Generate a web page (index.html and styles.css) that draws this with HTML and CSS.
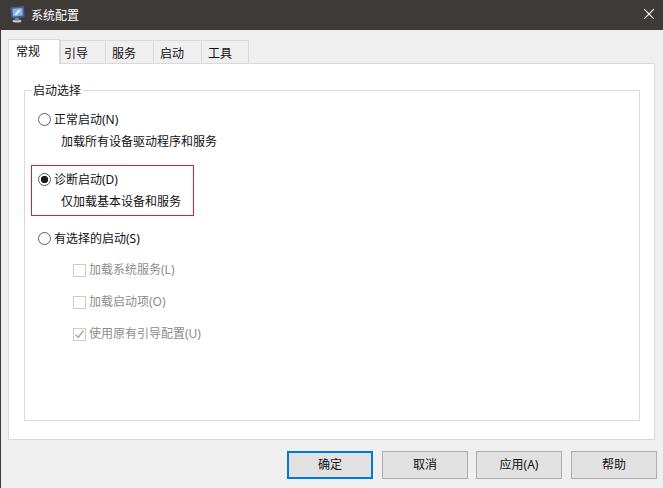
FILE: index.html
```html
<!DOCTYPE html>
<html lang="zh">
<head>
<meta charset="utf-8">
<title>系统配置</title>
<link rel="stylesheet" href="styles.css">
</head>
<body>
<div class="window">
  <header class="titlebar">
    <svg class="app-icon" width="15" height="17" viewBox="0 0 15 17">
      <ellipse cx="7" cy="15" rx="4.5" ry="1.6" fill="#c4c7cb"/>
      <rect x="5" y="11.5" width="4" height="3" fill="#7d828a"/>
      <path d="M0.5 1.2 L14 0 L14.6 11.2 L1.4 12.4 Z" fill="#4a5a9a"/>
      <path d="M2.4 2.8 L12.4 2 L12.8 9.6 L3 10.4 Z" fill="#7fb6e6"/>
      <path d="M4.5 8.2 L9 3.6 L10.6 4.6 L6 9.2 Z" fill="#e6f2fc"/>
    </svg>
    <span class="title">系统配置</span>
    <svg class="close" width="10" height="10" viewBox="0 0 10 10">
      <path d="M0 0 L10 10 M10 0 L0 10" stroke="#fff" stroke-width="1.1" fill="none"/>
    </svg>
  </header>
  <main class="content">
    <nav class="tabs">
      <span class="tab tab-active">常规</span>
      <span class="tab tab-second">引导</span>
      <span class="tab">服务</span>
      <span class="tab">启动</span>
      <span class="tab tab-last">工具</span>
    </nav>
    <section class="panel">
      <fieldset class="group">
        <legend class="legend">启动选择</legend>
        <div class="option option-first">
          <div class="radio-row"><span class="radio"></span><span class="label">正常启动(N)</span></div>
          <p class="desc">加载所有设备驱动程序和服务</p>
        </div>
        <div class="option option-marked">
          <div class="radio-row"><span class="radio radio-on"></span><span class="label">诊断启动(D)</span></div>
          <p class="desc">仅加载基本设备和服务</p>
        </div>
        <div class="option option-third">
          <div class="radio-row"><span class="radio"></span><span class="label">有选择的启动(S)</span></div>
        </div>
        <div class="checks">
          <div class="check-row"><span class="check"></span><span>加载系统服务(L)</span></div>
          <div class="check-row"><span class="check"></span><span>加载启动项(O)</span></div>
          <div class="check-row">
            <span class="check">
              <svg width="11" height="11" viewBox="0 0 11 11"><path d="M1.5 5.5 L4.2 8.5 L9.5 1.5" stroke="#a6a6a6" stroke-width="1.4" fill="none"/></svg>
            </span>
            <span>使用原有引导配置(U)</span>
          </div>
        </div>
      </fieldset>
    </section>
    <footer class="buttons">
      <button class="btn btn-default">确定</button>
      <button class="btn">取消</button>
      <button class="btn">应用(A)</button>
      <button class="btn">帮助</button>
    </footer>
  </main>
</div>
</body>
</html>
```
FILE: styles.css
```css
* { box-sizing: border-box; }
html, body { margin: 0; padding: 0; }
body {
  width: 663px;
  height: 488px;
  overflow: hidden;
  font-family: "Noto Sans", "Noto Sans CJK SC", sans-serif;
  font-size: 12px;
  color: #111;
}
.window {
  width: 663px;
  height: 488px;
  display: flex;
  flex-direction: column;
  background: #efefef;
  border-left: 1px solid #3d3a38;
}
.titlebar {
  height: 30px;
  flex: none;
  display: flex;
  align-items: center;
  background: #3d3a38;
  color: #fff;
  padding: 0 9px 2px 9px;
}
.app-icon { flex: none; }
.title { margin-left: 6px; padding-top: 2px; }
.close { margin-left: auto; }
.content {
  flex: 1;
  display: flex;
  flex-direction: column;
  padding: 9px 6px 10px 7px;
}
.tabs {
  display: flex;
  align-items: flex-end;
  height: 24px;
  position: relative;
  z-index: 1;
}
.tab {
  width: 49px;
  height: 23px;
  margin-left: -1px;
  padding: 1px 0 0 6px;
  display: flex;
  align-items: center;
  background: #efefef;
  border: 1px solid #d9d9d9;
  border-bottom: 0;
}
.tab-second { margin-left: 0; padding-left: 3px; width: 46px; }
.tab-last { width: 48px; }
.tab-active {
  width: 52px;
  height: 25px;
  margin-left: 0;
  margin-bottom: -1px;
  padding: 0 0 2px 7px;
  background: #fff;
}
.panel {
  width: 647px;
  height: 377px;
  flex: none;
  background: #fff;
  border: 1px solid #d9d9d9;
  padding: 19px 14px 18px 15px;
}
.group {
  height: 100%;
  margin: 0;
  min-width: 0;
  border: 1px solid #d9d9d9;
  padding: 0 0 0 13px;
  position: relative;
}
.legend {
  margin-left: -6px;
  padding: 0 2px 0 1px;
  height: 14px;
  line-height: 16px;
}
.radio-row, .check-row {
  display: flex;
  align-items: center;
  height: 18px;
  line-height: 18px;
}
.label { padding-top: 2px; }
.option-first { margin-top: 13px; }
.option-marked {
  width: 163px;
  height: 51px;
  margin: 14px 0 0 -7px;
  padding: 4px 0 0 6px;
  border: 1px solid #e81e1e;
}
.option-third { margin-top: 13px; }
.radio {
  width: 13px;
  height: 13px;
  flex: none;
  margin-right: 3px;
  border: 1px solid #5a5f66;
  border-radius: 50%;
  background: #fff;
}
.radio-on {
  background: radial-gradient(circle, #1a1a1a 0, #1a1a1a 3.4px, #fff 4px);
}
.desc {
  margin: 5px 0 0 23px;
  height: 18px;
  line-height: 18px;
}
.checks {
  margin: 14px 0 0 35px;
  display: flex;
  flex-direction: column;
  gap: 14px;
  color: #8c8c8c;
}
.check {
  width: 13px;
  height: 13px;
  flex: none;
  margin-right: 3px;
  border: 1px solid #cccccc;
  display: flex;
  align-items: center;
  justify-content: center;
}
.buttons {
  display: flex;
  justify-content: flex-end;
  gap: 9px;
  margin-top: 11px;
}
.btn {
  width: 86px;
  height: 28px;
  padding: 0 0 2px;
  font: inherit;
  color: #111;
  background: #e1e1e1;
  border: 1px solid #adadad;
}
.btn:nth-child(2) { margin-right: -1px; }
.btn-default { border: 2px solid #0078d7; }
```
